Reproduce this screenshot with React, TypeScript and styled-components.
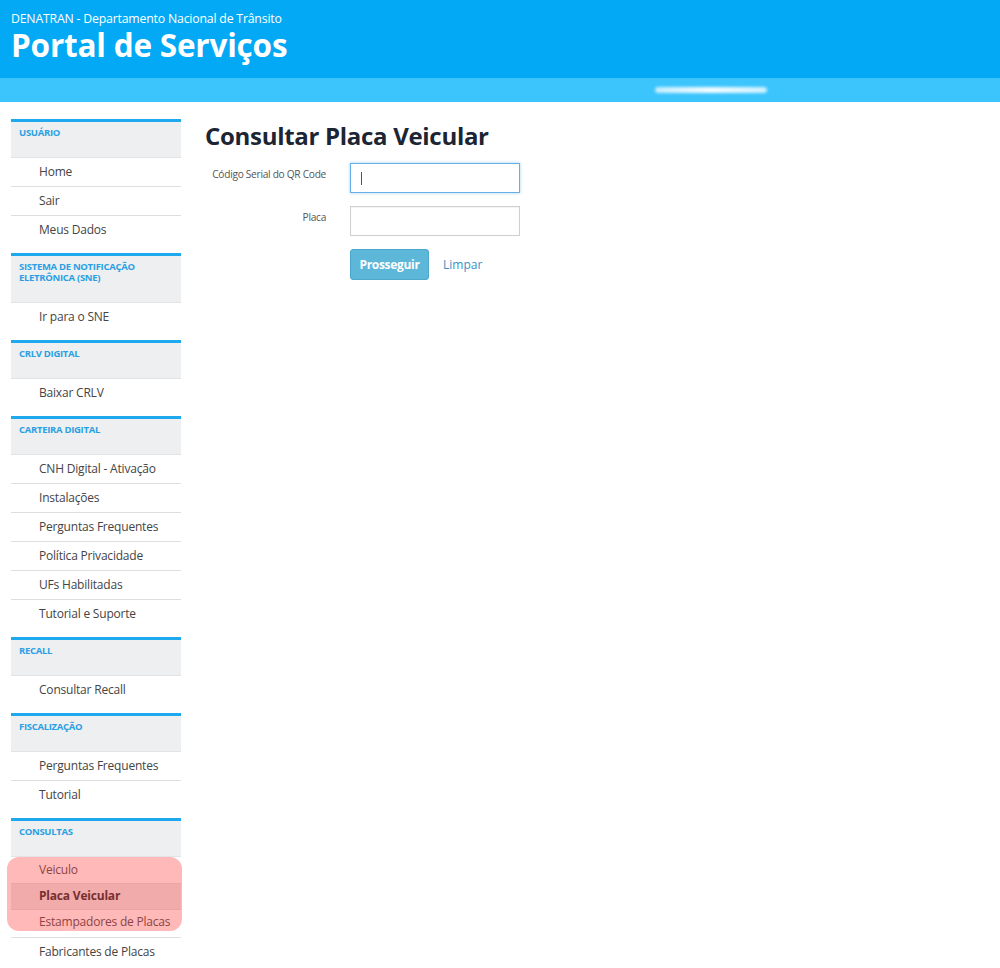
import React from 'react';
import { createGlobalStyle, styled } from 'styled-components';

type MenuItem = { label: string; active?: boolean };
type MenuSection = { title: string[]; items: MenuItem[]; highlight?: [number, number] };

const sections: MenuSection[] = [
    { title: ['USUÁRIO'], items: [{ label: 'Home' }, { label: 'Sair' }, { label: 'Meus Dados' }] },
    { title: ['SISTEMA DE NOTIFICAÇÃO', 'ELETRÔNICA (SNE)'], items: [{ label: 'Ir para o SNE' }] },
    { title: ['CRLV DIGITAL'], items: [{ label: 'Baixar CRLV' }] },
    {
        title: ['CARTEIRA DIGITAL'],
        items: [
            { label: 'CNH Digital - Ativação' },
            { label: 'Instalações' },
            { label: 'Perguntas Frequentes' },
            { label: 'Política Privacidade' },
            { label: 'UFs Habilitadas' },
            { label: 'Tutorial e Suporte' },
        ],
    },
    { title: ['RECALL'], items: [{ label: 'Consultar Recall' }] },
    { title: ['FISCALIZAÇÃO'], items: [{ label: 'Perguntas Frequentes' }, { label: 'Tutorial' }] },
    {
        title: ['CONSULTAS'],
        items: [
            { label: 'Veiculo' },
            { label: 'Placa Veicular', active: true },
            { label: 'Estampadores de Placas' },
            { label: 'Fabricantes de Placas' },
        ],
        highlight: [0, 3],
    },
];

const App = () => {
    const renderItems = (items: MenuItem[]) =>
        items.map((it, i) => (
            <Item key={i} $active={it.active}>
                {it.label}
            </Item>
        ));

    return (
        <>
            <GlobalStyle />
            <Header>
                <Subtitle>DENATRAN - Departamento Nacional de Trânsito</Subtitle>
                <Title>Portal de Serviços</Title>
            </Header>
            <Strip>
                <Blurred />
            </Strip>
            <Layout>
                <Sidebar>
                    {sections.map((s, i) => (
                        <Section key={i}>
                            <SectionTitle>
                                {s.title.map((t, j) => (
                                    <div key={j}>{t}</div>
                                ))}
                            </SectionTitle>
                            {s.highlight ? (
                                <>
                                    <Highlight>{renderItems(s.items.slice(s.highlight[0], s.highlight[1]))}</Highlight>
                                    {renderItems(s.items.slice(s.highlight[1]))}
                                </>
                            ) : (
                                renderItems(s.items)
                            )}
                        </Section>
                    ))}
                </Sidebar>
                <Main>
                    <PageTitle>Consultar Placa Veicular</PageTitle>
                    <Form>
                        <Label>Código Serial do QR Code</Label>
                        <FakeInput $focused>
                            <Caret />
                        </FakeInput>
                        <Label>Placa</Label>
                        <FakeInput />
                        <span />
                        <Actions>
                            <Button>Prosseguir</Button>
                            <LinkButton>Limpar</LinkButton>
                        </Actions>
                    </Form>
                </Main>
            </Layout>
        </>
    );
};

const GlobalStyle = createGlobalStyle`
    html, body {
        margin: 0;
        padding: 0;
        background: #fff;
        font-family: 'Open Sans', 'Liberation Sans', sans-serif;
    }
`;

const Header = styled.div`
    background: #03a9f4;
    height: 78px;
    padding: 11px 11px 0;
    box-sizing: border-box;
    color: #fff;
`;

const Subtitle = styled.div`
    font-size: 12.3px;
    line-height: 15px;
    margin-bottom: 2px;
    letter-spacing: -0.2px;
`;

const Title = styled.div`
    font-size: 31.5px;
    font-weight: 700;
    line-height: 34px;
    letter-spacing: -0.2px;
`;

const Strip = styled.div`
    background: #3bc5fc;
    height: 24px;
    display: flex;
    align-items: center;
`;

const Blurred = styled.div`
    margin-left: 655px;
    width: 112px;
    height: 6px;
    border-radius: 3px;
    background: linear-gradient(90deg, rgba(255, 255, 255, 0.7), rgba(255, 255, 255, 0.95) 50%, rgba(255, 255, 255, 0.75));
    filter: blur(1.8px);
`;

const Layout = styled.div`
    display: flex;
    gap: 24px;
    padding: 17px 0 0 11px;
`;

const Sidebar = styled.div`
    width: 170px;
    display: flex;
    flex-direction: column;
    gap: 8px;
`;

const Section = styled.div`
    display: flex;
    flex-direction: column;
`;

const SectionTitle = styled.div`
    border-top: 3px solid #1ea8ee;
    border-bottom: 1px solid #e2e3e5;
    background: #eeeff1;
    padding: 5px 8px 19px;
    color: #2a9fe3;
    font-size: 9.5px;
    font-weight: 700;
    line-height: 11px;
    letter-spacing: -0.3px;
`;

const Item = styled.div<{ $active?: boolean }>`
    height: 29px;
    box-sizing: border-box;
    padding: 0 0 2px 28px;
    display: flex;
    align-items: center;
    border-bottom: 1px solid #dedede;
    font-size: 12px;
    letter-spacing: -0.2px;
    white-space: nowrap;
    color: ${(p) => (p.$active ? '#222' : '#444')};
    font-weight: ${(p) => (p.$active ? 700 : 400)};
    background: ${(p) => (p.$active ? '#e8e8e8' : 'transparent')};
    &:last-child {
        border-bottom: none;
    }
`;

const Highlight = styled.div`
    position: relative;
    ${Item} {
        height: 27px;
    }
    ${Item}:nth-child(2) {
        height: 26px;
    }
    ${Item}:last-child {
        border-bottom: 1px solid #dedede;
        height: 28px;
        padding-bottom: 4px;
    }
    &::after {
        content: '';
        position: absolute;
        left: -4px;
        right: -1px;
        top: 0;
        bottom: 7px;
        border-radius: 12px;
        background: rgba(255, 70, 70, 0.38);
        pointer-events: none;
    }
`;

const Main = styled.div`
    flex: 1;
`;

const PageTitle = styled.h1`
    margin: 1px 0 11px;
    font-size: 24px;
    font-weight: 700;
    color: #1b2534;
    line-height: 32px;
    letter-spacing: -0.3px;
`;

const Form = styled.div`
    display: grid;
    grid-template-columns: 121px 170px;
    column-gap: 24px;
    row-gap: 13px;
    align-items: start;
`;

const Label = styled.div`
    text-align: right;
    font-size: 10.2px;
    color: #555;
    padding-top: 4px;
    letter-spacing: -0.3px;
    white-space: nowrap;
`;

const FakeInput = styled.div<{ $focused?: boolean }>`
    height: 30px;
    box-sizing: border-box;
    border: 1px solid ${(p) => (p.$focused ? '#66afe9' : '#cfcfcf')};
    box-shadow: ${(p) => (p.$focused ? '0 0 3px rgba(102, 175, 233, 0.6)' : 'inset 0 1px 1px rgba(0,0,0,0.05)')};
    display: flex;
    align-items: center;
    padding-left: 10px;
    background: #fff;
`;

const Caret = styled.span`
    width: 1px;
    height: 13px;
    background: #555;
`;

const Actions = styled.div`
    display: flex;
    align-items: center;
    gap: 14px;
`;

const Button = styled.div`
    width: 79px;
    height: 31px;
    box-sizing: border-box;
    border-radius: 3px;
    background: #5cb7d9;
    border: 1px solid #4aa8cc;
    color: #fff;
    font-size: 12px;
    font-weight: 700;
    display: flex;
    align-items: center;
    justify-content: center;
    letter-spacing: -0.3px;
`;

const LinkButton = styled.span`
    color: #3a90c8;
    font-size: 12px;
`;

export default App;
